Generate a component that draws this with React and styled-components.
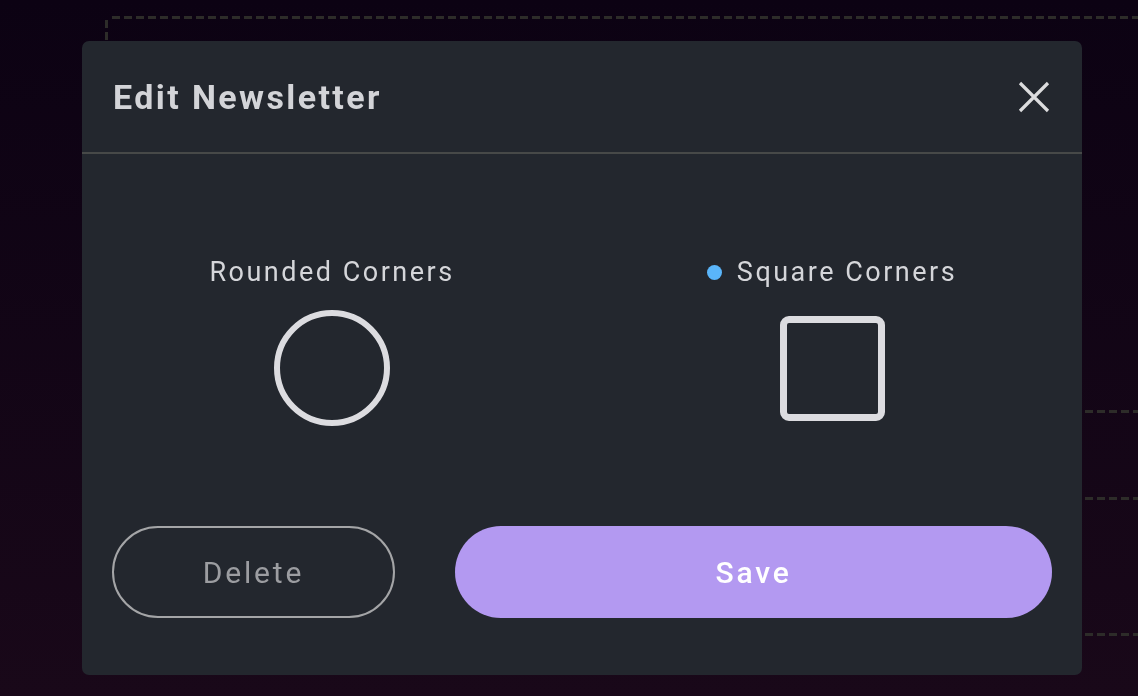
import React from "react";
import styled, { createGlobalStyle } from "styled-components";

const GlobalStyle = createGlobalStyle`
  html, body {
    margin: 0;
    padding: 0;
    height: 100%;
  }
  body {
    font-family: Roboto, "Noto Sans", "Liberation Sans", sans-serif;
    background: linear-gradient(180deg, #0c0213 0%, #190819 100%);
    overflow: hidden;
  }
`;

const dashX = "repeating-linear-gradient(90deg, #2d2c29 0 8px, transparent 8px 12px)";
const dashY = "repeating-linear-gradient(180deg, #2d2c29 0 8px, transparent 8px 12px)";

// page behind the dialog
const Page = styled.div`
  height: 696px;
  padding: 16px 0 0 105px;
  box-sizing: border-box;
`;

const Board = styled.div`
  width: 1100px;
  height: 630px;
  background-image: ${dashX}, ${dashY};
  background-size: 100% 3px, 3px 100%;
  background-position: 7px 0, 0 4px;
  background-repeat: no-repeat;
  display: flex;
  flex-direction: column;
  padding-top: 394px;
  box-sizing: border-box;
`;

const Slot = styled.div`
  height: ${(p) => p.$h}px;
  margin-left: 200px;
  flex-shrink: 0;
  background-image: ${dashX};
  background-size: 100% 3px;
  background-repeat: no-repeat;
`;

// dialog
const Overlay = styled.div`
  position: fixed;
  inset: 0;
  display: flex;
  align-items: flex-start;
  padding: 41px 0 0 82px;
`;

const Modal = styled.div`
  width: 1000px;
  height: 634px;
  background: #23272e;
  border-radius: 7px;
  display: flex;
  flex-direction: column;
  overflow: hidden;
`;

const Header = styled.div`
  height: 111px;
  display: flex;
  align-items: center;
  justify-content: space-between;
  padding: 0 32px 0 31px;
  border-bottom: 2px solid #474948;
`;

const Title = styled.h2`
  margin: 0;
  font-size: 34px;
  font-weight: 700;
  letter-spacing: 2.4px;
  color: #d3d4d8;
`;

const CloseButton = styled.button`
  width: 32px;
  height: 32px;
  padding: 0;
  border: none;
  background: none;
  color: #dcdcde;
  display: flex;
  cursor: pointer;
`;

const Options = styled.div`
  display: grid;
  grid-template-columns: 1fr 1fr;
  padding-top: 103px;
`;

const Option = styled.div`
  display: flex;
  flex-direction: column;
  align-items: center;
  gap: 23px;
`;

const Label = styled.div`
  display: flex;
  align-items: center;
  gap: 15px;
  height: 30px;
  font-size: 27px;
  letter-spacing: 2.5px;
  color: #d5d6da;
`;

const Dot = styled.span`
  width: 15px;
  height: 15px;
  border-radius: 50%;
  background: #5ab5fa;
`;

const ShapeSlot = styled.div`
  height: 116px;
  display: flex;
  align-items: center;
  justify-content: center;
`;

const Shape = styled.div`
  box-sizing: border-box;
  width: ${(p) => (p.$round ? 116 : 105)}px;
  height: ${(p) => (p.$round ? 116 : 105)}px;
  border: ${(p) => (p.$round ? 6 : 7)}px solid #dcdce0;
  border-radius: ${(p) => (p.$round ? "50%" : "9px")};
`;

const Actions = styled.div`
  display: flex;
  gap: 60px;
  padding: 100px 30px 0;
`;

const Button = styled.button`
  height: 92px;
  border-radius: 46px;
  font-family: inherit;
  font-size: 30px;
  letter-spacing: 2.8px;
  cursor: pointer;
  ${(p) =>
    p.$primary
      ? `
    flex: 1;
    border: none;
    background: #b399f1;
    color: #ffffff;
    font-weight: 500;
  `
      : `
    width: 283px;
    border: 2px solid #a4a5a7;
    background: transparent;
    color: #9c9da1;
  `}
`;

export default function App() {
  return (
    <>
      <GlobalStyle />
      <Page>
        <Board>
          <Slot $h={87} />
          <Slot $h={136} />
          <Slot $h={13} />
        </Board>
      </Page>
      <Overlay>
        <Modal>
          <Header>
            <Title>Edit Newsletter</Title>
            <CloseButton aria-label="Close">
              <svg width="32" height="32" viewBox="0 0 32 32">
                <path
                  d="M2 2 L30 30 M30 2 L2 30"
                  stroke="currentColor"
                  strokeWidth="3.2"
                  strokeLinecap="butt"
                />
              </svg>
            </CloseButton>
          </Header>
          <Options>
            <Option>
              <Label>Rounded Corners</Label>
              <ShapeSlot>
                <Shape $round />
              </ShapeSlot>
            </Option>
            <Option>
              <Label>
                <Dot />
                Square Corners
              </Label>
              <ShapeSlot>
                <Shape />
              </ShapeSlot>
            </Option>
          </Options>
          <Actions>
            <Button>Delete</Button>
            <Button $primary>Save</Button>
          </Actions>
        </Modal>
      </Overlay>
    </>
  );
}
